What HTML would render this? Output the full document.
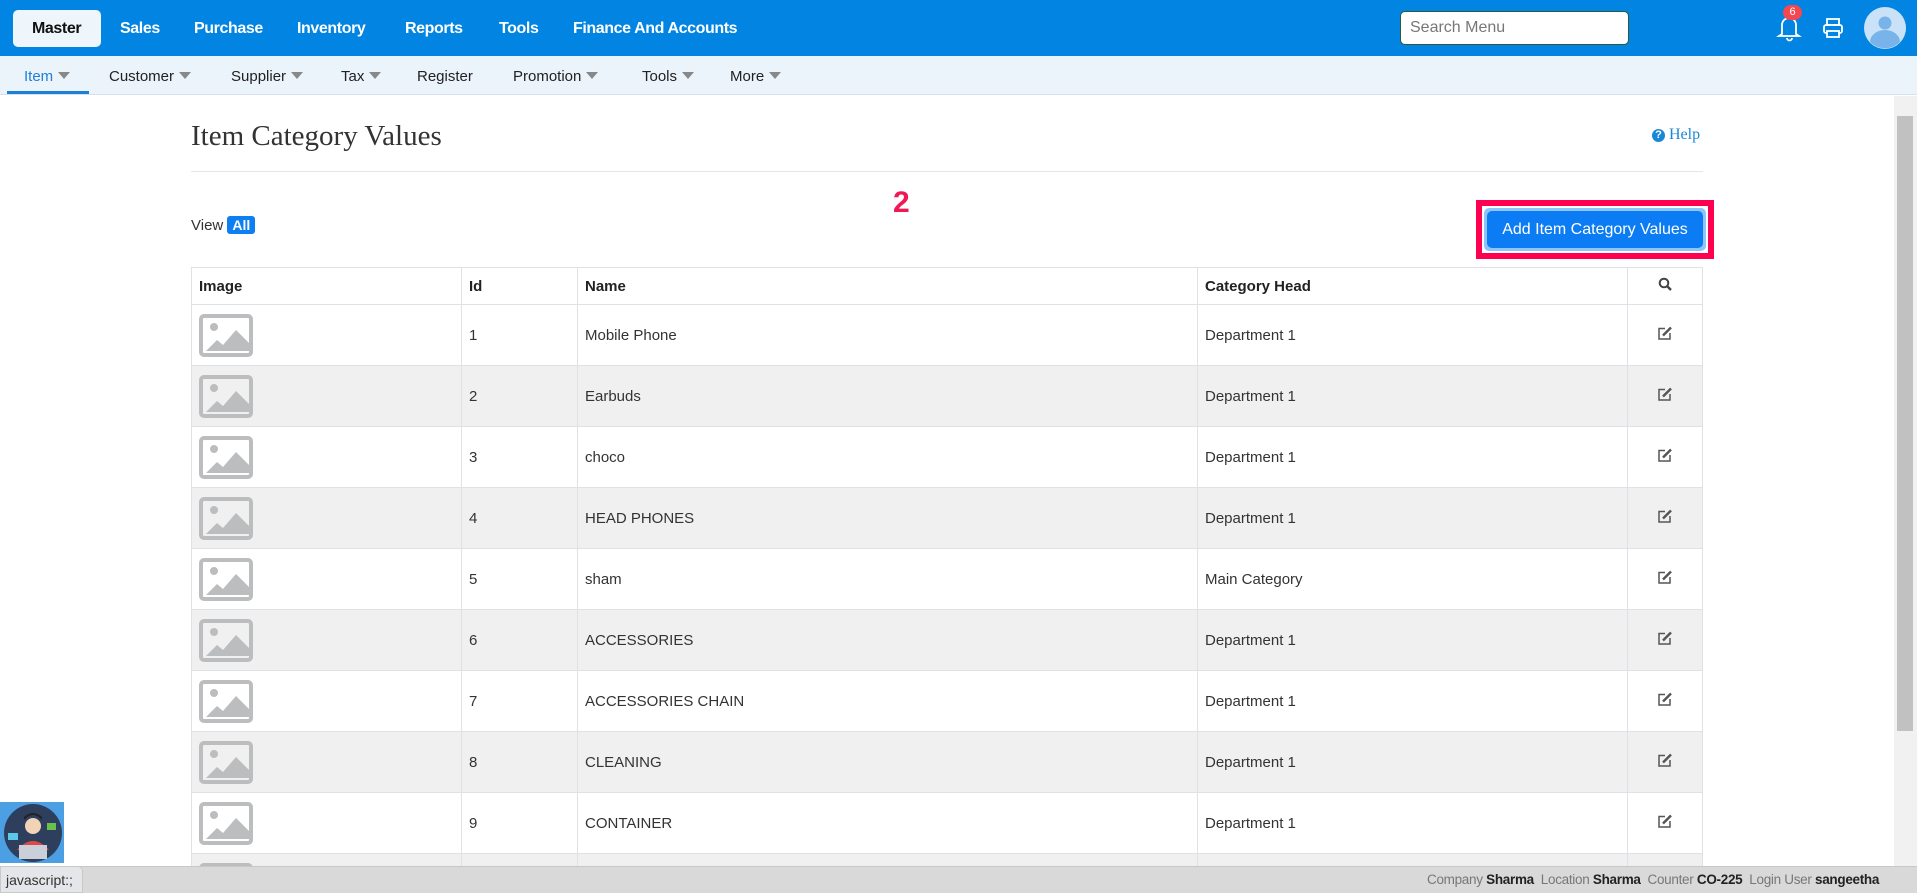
<!DOCTYPE html>
<html><head><meta charset="utf-8"><style>
*{box-sizing:border-box;margin:0;padding:0}
html{width:1917px;height:893px;overflow:hidden}
body{width:1917px;height:893px;overflow:hidden;background:#fff;font-family:"Liberation Sans",sans-serif;position:relative;color:#333}
#wrap{position:absolute;left:0;top:0;width:1917px;height:893px;overflow:hidden}
.top{position:absolute;left:0;top:0;width:1917px;height:56px;background:#0284e3}
.top .m{position:absolute;top:20px;color:#fff;font-weight:bold;font-size:16px;letter-spacing:-0.4px}
.master{position:absolute;left:13px;top:10px;width:88px;height:37px;background:#eef5fb;border-radius:5px}
.sub{position:absolute;left:0;top:56px;width:1917px;height:39px;background:#ebf3fb;border-bottom:1px solid #d5e1ec}
.sub span{position:absolute;top:12px;font-size:15px;color:#222}
.car{display:inline-block;width:0;height:0;border-left:6px solid transparent;border-right:6px solid transparent;border-top:7px solid #888;margin-left:5px;vertical-align:2px}
.abs{position:absolute}
table{border-collapse:collapse;position:absolute;left:191px;top:267px;width:1512px;font-size:15px}
td,th{border:1px solid #dee2e6;text-align:left;padding:0 7px;vertical-align:middle}
th{height:37px;font-weight:bold;color:#222}
td{height:61px;color:#333}
tr.g td{background:#f0f0f0}
.ic{width:54px;height:43px;border:4px solid #bcbdbf;border-radius:5px;position:relative;overflow:hidden}
</style></head><body><div id="wrap">
<div class="top">
<div class="master"></div>
<span class="m" style="left:32px;color:#111">Master</span>
<span class="m" style="left:120px">Sales</span>
<span class="m" style="left:194px">Purchase</span>
<span class="m" style="left:297px">Inventory</span>
<span class="m" style="left:405px">Reports</span>
<span class="m" style="left:499px">Tools</span>
<span class="m" style="left:573px">Finance And Accounts</span>
<div class="abs" style="left:1400px;top:11px;width:229px;height:34px;background:#fff;border:1px solid #2a5a3a;border-radius:5px;padding:7px 9px;font-size:16px;color:#777">Search Menu</div>
<svg class="abs" style="left:1776px;top:12px" width="28" height="30" viewBox="0 0 28 30"><path d="M6 22 V13 a7 7 0 0 1 14 0 V22 l3 2 H3 z" fill="none" stroke="#fff" stroke-width="1.8"/><path d="M11 26 a2.5 2.5 0 0 0 5 0" fill="none" stroke="#fff" stroke-width="1.8"/></svg>
<div class="abs" style="left:1783px;top:5px;width:19px;height:15px;background:#f4474f;border-radius:8px;color:#fff;font-size:11px;text-align:center;line-height:15px">6</div>
<svg class="abs" style="left:1822px;top:17px" width="22" height="22" viewBox="0 0 22 22"><rect x="5" y="2" width="12" height="6" fill="none" stroke="#fff" stroke-width="1.8"/><rect x="2" y="8" width="18" height="8" rx="2" fill="none" stroke="#fff" stroke-width="1.8"/><rect x="5" y="14" width="12" height="6" fill="#0284e3" stroke="#fff" stroke-width="1.8"/></svg>
<svg class="abs" style="left:1864px;top:7px" width="42" height="42" viewBox="0 0 42 42"><circle cx="21" cy="21" r="21" fill="#c9e2f8"/><circle cx="21" cy="16" r="6.5" fill="#78b4ea"/><path d="M6 35 a15 12 0 0 1 30 0 a21 21 0 0 1 -30 0z" fill="#78b4ea"/></svg>
</div>
<div class="sub">
<span style="left:24px;color:#1e7fd8">Item<i class="car"></i></span>
<div class="abs" style="left:7px;top:35px;width:82px;height:3px;background:#1e7fd8"></div>
<span style="left:109px">Customer<i class="car"></i></span>
<span style="left:231px">Supplier<i class="car"></i></span>
<span style="left:341px">Tax<i class="car"></i></span>
<span style="left:417px">Register</span>
<span style="left:513px">Promotion<i class="car"></i></span>
<span style="left:642px">Tools<i class="car"></i></span>
<span style="left:730px">More<i class="car"></i></span>
</div>
<div class="abs" style="left:1894px;top:96px;width:23px;height:770px;background:#f1f1f1"></div>
<div class="abs" style="left:1897px;top:116px;width:16px;height:615px;background:#c1c1c1"></div>
<div class="abs" style="left:191px;top:120px;font-family:'Liberation Serif',serif;font-size:29px;color:#333">Item Category Values</div>
<div class="abs" style="left:1652px;top:126px;font-family:'Liberation Serif',serif;font-size:16px;color:#1a88d8"><span style="display:inline-block;width:13px;height:13px;border-radius:50%;background:#1a88d8;color:#fff;font-size:11px;font-weight:bold;text-align:center;line-height:13px;font-family:'Liberation Sans';vertical-align:1px">?</span> Help</div>
<div class="abs" style="left:191px;top:171px;width:1512px;height:1px;background:#e6e6e6"></div>
<div class="abs" style="left:191px;top:217px;font-size:15px;color:#333">View <span style="background:#0d7ff0;color:#fff;font-weight:bold;padding:1px 5px;border-radius:3px;font-size:14px">All</span></div>
<div class="abs" style="left:893px;top:186px;font-size:30px;font-weight:bold;color:#ee1955;text-shadow:0 0 3px #fff,0 0 3px #fff">2</div>
<div class="abs" style="left:1476px;top:200px;width:238px;height:59px;background:#ff0050"></div>
<div class="abs" style="left:1482px;top:206px;width:226px;height:47px;background:#fff"></div>
<div class="abs" style="left:1484px;top:208px;width:222px;height:43px;background:#8cc4fb;border-radius:5px"></div>
<div class="abs" style="left:1487px;top:211px;width:216px;height:37px;background:#0b7cf3;border-radius:5px;color:#fff;font-size:16px;text-align:center;line-height:37px">Add Item Category Values</div>
<table>
<tr><th style="width:270px">Image</th><th style="width:116px">Id</th><th style="width:620px">Name</th><th style="width:430px">Category Head</th><th style="text-align:center"><svg width="15" height="15" viewBox="0 0 15 15"><circle cx="6" cy="6" r="4.3" fill="none" stroke="#444" stroke-width="2"/><path d="M9 9 L13 13" stroke="#444" stroke-width="2.4"/></svg></th></tr>
<tr><td><div class="ic"><svg width="48" height="36"><circle cx="11" cy="9" r="4" fill="#bcbdbf"/><path d="M3 33 L14 22 L20 27 L33 12 L46 25 V33 Z" fill="#bcbdbf"/></svg></div></td><td>1</td><td>Mobile Phone</td><td>Department 1</td><td style="text-align:center"><svg width="17" height="15"><path d="M8 2.5 H2 V13 H13 V7" fill="none" stroke="#555" stroke-width="1.5"/><path d="M6 9.5 L14 1.5" stroke="#555" stroke-width="2.5"/></svg></td></tr>
<tr class="g"><td><div class="ic"><svg width="48" height="36"><circle cx="11" cy="9" r="4" fill="#bcbdbf"/><path d="M3 33 L14 22 L20 27 L33 12 L46 25 V33 Z" fill="#bcbdbf"/></svg></div></td><td>2</td><td>Earbuds</td><td>Department 1</td><td style="text-align:center"><svg width="17" height="15"><path d="M8 2.5 H2 V13 H13 V7" fill="none" stroke="#555" stroke-width="1.5"/><path d="M6 9.5 L14 1.5" stroke="#555" stroke-width="2.5"/></svg></td></tr>
<tr><td><div class="ic"><svg width="48" height="36"><circle cx="11" cy="9" r="4" fill="#bcbdbf"/><path d="M3 33 L14 22 L20 27 L33 12 L46 25 V33 Z" fill="#bcbdbf"/></svg></div></td><td>3</td><td>choco</td><td>Department 1</td><td style="text-align:center"><svg width="17" height="15"><path d="M8 2.5 H2 V13 H13 V7" fill="none" stroke="#555" stroke-width="1.5"/><path d="M6 9.5 L14 1.5" stroke="#555" stroke-width="2.5"/></svg></td></tr>
<tr class="g"><td><div class="ic"><svg width="48" height="36"><circle cx="11" cy="9" r="4" fill="#bcbdbf"/><path d="M3 33 L14 22 L20 27 L33 12 L46 25 V33 Z" fill="#bcbdbf"/></svg></div></td><td>4</td><td>HEAD PHONES</td><td>Department 1</td><td style="text-align:center"><svg width="17" height="15"><path d="M8 2.5 H2 V13 H13 V7" fill="none" stroke="#555" stroke-width="1.5"/><path d="M6 9.5 L14 1.5" stroke="#555" stroke-width="2.5"/></svg></td></tr>
<tr><td><div class="ic"><svg width="48" height="36"><circle cx="11" cy="9" r="4" fill="#bcbdbf"/><path d="M3 33 L14 22 L20 27 L33 12 L46 25 V33 Z" fill="#bcbdbf"/></svg></div></td><td>5</td><td>sham</td><td>Main Category</td><td style="text-align:center"><svg width="17" height="15"><path d="M8 2.5 H2 V13 H13 V7" fill="none" stroke="#555" stroke-width="1.5"/><path d="M6 9.5 L14 1.5" stroke="#555" stroke-width="2.5"/></svg></td></tr>
<tr class="g"><td><div class="ic"><svg width="48" height="36"><circle cx="11" cy="9" r="4" fill="#bcbdbf"/><path d="M3 33 L14 22 L20 27 L33 12 L46 25 V33 Z" fill="#bcbdbf"/></svg></div></td><td>6</td><td>ACCESSORIES</td><td>Department 1</td><td style="text-align:center"><svg width="17" height="15"><path d="M8 2.5 H2 V13 H13 V7" fill="none" stroke="#555" stroke-width="1.5"/><path d="M6 9.5 L14 1.5" stroke="#555" stroke-width="2.5"/></svg></td></tr>
<tr><td><div class="ic"><svg width="48" height="36"><circle cx="11" cy="9" r="4" fill="#bcbdbf"/><path d="M3 33 L14 22 L20 27 L33 12 L46 25 V33 Z" fill="#bcbdbf"/></svg></div></td><td>7</td><td>ACCESSORIES CHAIN</td><td>Department 1</td><td style="text-align:center"><svg width="17" height="15"><path d="M8 2.5 H2 V13 H13 V7" fill="none" stroke="#555" stroke-width="1.5"/><path d="M6 9.5 L14 1.5" stroke="#555" stroke-width="2.5"/></svg></td></tr>
<tr class="g"><td><div class="ic"><svg width="48" height="36"><circle cx="11" cy="9" r="4" fill="#bcbdbf"/><path d="M3 33 L14 22 L20 27 L33 12 L46 25 V33 Z" fill="#bcbdbf"/></svg></div></td><td>8</td><td>CLEANING</td><td>Department 1</td><td style="text-align:center"><svg width="17" height="15"><path d="M8 2.5 H2 V13 H13 V7" fill="none" stroke="#555" stroke-width="1.5"/><path d="M6 9.5 L14 1.5" stroke="#555" stroke-width="2.5"/></svg></td></tr>
<tr><td><div class="ic"><svg width="48" height="36"><circle cx="11" cy="9" r="4" fill="#bcbdbf"/><path d="M3 33 L14 22 L20 27 L33 12 L46 25 V33 Z" fill="#bcbdbf"/></svg></div></td><td>9</td><td>CONTAINER</td><td>Department 1</td><td style="text-align:center"><svg width="17" height="15"><path d="M8 2.5 H2 V13 H13 V7" fill="none" stroke="#555" stroke-width="1.5"/><path d="M6 9.5 L14 1.5" stroke="#555" stroke-width="2.5"/></svg></td></tr>
<tr class="g"><td><div class="ic"></div></td><td></td><td></td><td></td><td></td></tr>
</table>
<div class="abs" style="left:0;top:866px;width:1917px;height:27px;background:#d9d9d9;border-top:1px solid #c8c8c8"></div>
<div class="abs" style="left:0;top:866px;width:83px;height:27px;background:#e4e6ea;border:1px solid #c8c8c8;border-radius:0 5px 0 0;font-size:14px;color:#333;padding:5px 5px">javascript:;</div>
<div class="abs" style="left:1427px;top:872px;font-size:13.5px;color:#777;letter-spacing:-0.3px">Company <b style="color:#222">Sharma</b>&nbsp; Location <b style="color:#222">Sharma</b>&nbsp; Counter <b style="color:#222">CO-225</b>&nbsp; Login User <b style="color:#222">sangeetha</b></div>
<svg class="abs" style="left:0;top:802px" width="64" height="61" viewBox="0 0 64 61"><rect width="64" height="61" fill="#4d9fe3"/><circle cx="33" cy="31" r="29" fill="#2e3f5e"/><circle cx="33" cy="24" r="8" fill="#f2d3b5"/><path d="M24 18 q9 -10 18 0 v-3 q-9 -8 -18 0z" fill="#222"/><path d="M17 48 q16 -18 32 0z" fill="#e04848"/><rect x="19" y="43" width="28" height="14" fill="#c9d0da"/><rect x="8" y="31" width="10" height="7" fill="#5ac8e8"/><rect x="47" y="21" width="9" height="7" fill="#6bc04b"/></svg>
</div></body></html>
